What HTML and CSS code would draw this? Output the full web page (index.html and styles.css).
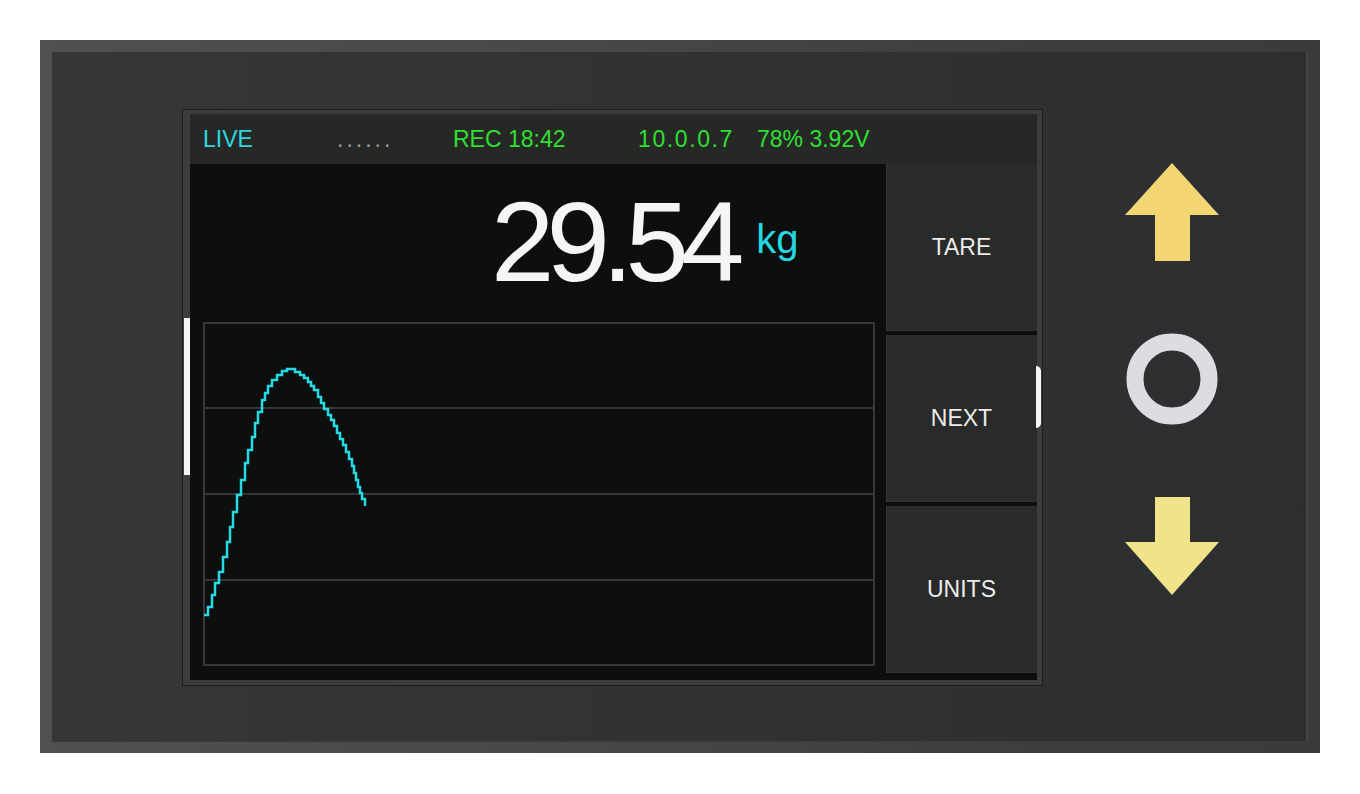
FILE: index.html
```html
<!DOCTYPE html>
<html lang="en">
<head>
<meta charset="utf-8">
<title>Load cell display</title>
<link rel="stylesheet" href="styles.css">
</head>
<body>
<div class="device">
  <div class="panel">
    <div class="screen">
      <div class="status">
        <span class="st st-live">LIVE</span>
        <span class="st st-dots">......</span>
        <span class="st st-green">REC 18:42</span>
        <span class="st st-green st-ip">10.0.0.7</span>
        <span class="st st-green">78% 3.92V</span>
      </div>
      <div class="body">
        <div class="main">
          <div class="reading">
            <span class="value">29.54</span>
            <span class="unit">kg</span>
          </div>
          <svg class="graph" viewBox="203 322 672 344" width="672" height="344">
            <rect x="204" y="323" width="670" height="342" fill="none" stroke="#383838" stroke-width="2"/>
            <g stroke="#363636" stroke-width="2">
              <line x1="204" y1="408" x2="874" y2="408"/>
              <line x1="204" y1="494" x2="874" y2="494"/>
              <line x1="204" y1="580" x2="874" y2="580"/>
            </g>
            <path class="trace" d="M204,615 H208 V607 H212 V595 H215 V583 H219 V572 H223 V557 H227 V542 H230 V527 H233 V512 H237 V495 H241 V480 H245 V463 H248 V450 H252 V437 H255 V423 H258 V412 H262 V400 H265 V393 H268 V386 H272 V380 H277 V375 H282 V371 H287 V369 H295 V372 H300 V375 H304 V378 H308 V382 H311 V386 H314 V390 H318 V397 H321 V403 H324 V409 H328 V415 H331 V420 H334 V426 H337 V433 H340 V439 H343 V445 H346 V452 H349 V459 H352 V466 H354 V473 H356 V480 H358 V487 H360 V493 H362 V499 H365 V506"/>
          </svg>
        </div>
        <div class="softkeys">
          <div class="key">TARE</div>
          <div class="key">NEXT</div>
          <div class="key">UNITS</div>
        </div>
      </div>
      <div class="scroll-mark"></div>
      <div class="tab-mark"></div>
    </div>
    <div class="nav">
      <svg class="nav-icon" width="94" height="98" viewBox="0 0 94 98">
        <polygon points="47,0 94,52 65,52 65,98 30,98 30,52 0,52" fill="#f3d574"/>
      </svg>
      <svg class="nav-ring" width="92" height="92" viewBox="0 0 92 92">
        <circle cx="46" cy="46" r="37" fill="none" stroke="#dcdde0" stroke-width="17"/>
      </svg>
      <svg class="nav-icon" width="94" height="98" viewBox="0 0 94 98">
        <polygon points="30,0 65,0 65,45 94,45 47,98 0,45 30,45" fill="#f0e38a"/>
      </svg>
    </div>
  </div>
</div>
</body>
</html>
```

FILE: styles.css
```css
* { box-sizing: border-box; }

html, body {
  margin: 0;
  padding: 0;
  background: #ffffff;
}

body {
  padding: 40px;
  width: 1360px;
  height: 794px;
}

/* outer housing */
.device {
  width: 1280px;
  height: 713px;
  padding: 12px 12px 11px 12px;
  background: linear-gradient(90deg, #4f5051 0%, #47484a 40%, #3d3e40 75%, #3a3b3d 100%);
}

.panel {
  height: 690px;
  display: flex;
  align-items: flex-start;
  padding: 58px 0 0 131px;
  background: linear-gradient(90deg, #353637 0%, #313234 50%, #2d2e30 100%);
  box-shadow: inset -2px 0 0 #434446, inset 0 -1px 0 #3a3b3d;
}

/* LCD module */
.screen {
  position: relative;
  width: 859px;
  height: 575px;
  border-style: solid;
  border-color: #3b3d3c;
  border-width: 4px 5px 5px 7px;
  box-shadow: 0 0 0 1px #1c1e1d;
  background: #0d0e0e;
  display: flex;
  flex-direction: column;
}

.status {
  height: 50px;
  flex: none;
  background: #262826;
  display: grid;
  grid-template-columns: 134px 116px 185px 119px auto;
  align-items: center;
  padding-left: 13px;
}

.st {
  font-family: "Liberation Sans", Arial, sans-serif;
  font-size: 23px;
  line-height: 26px;
  white-space: pre;
}

.st-live { color: #2fd6e0; }
.st-dots { color: #9a9a9a; letter-spacing: 3px; }
.st-green { color: #2fe032; }
.st-ip { letter-spacing: 1.6px; }

.body {
  flex: 1;
  display: flex;
}

.main {
  width: 696px;
  background: #0d0e0e;
  display: flex;
  flex-direction: column;
}

.reading {
  height: 158px;
  display: flex;
  align-items: flex-start;
  padding: 21px 0 0 301px;
}

.value {
  font-family: "Liberation Sans", Arial, sans-serif;
  font-size: 114px;
  line-height: 114px;
  letter-spacing: -8px;
  color: #f5f5f5;
}

.unit {
  font-family: "Liberation Sans", Arial, sans-serif;
  font-size: 40px;
  line-height: 40px;
  color: #22d8e2;
  margin: 34px 0 0 20px;
}

.graph {
  display: block;
  margin-left: 13px;
}

.trace {
  fill: none;
  stroke: #26dbe3;
  stroke-width: 2.5;
}

.softkeys {
  width: 151px;
  display: flex;
  flex-direction: column;
  gap: 4px;
  padding-bottom: 7px;
  background: #0d0e0e;
}

.key {
  flex: 1;
  display: flex;
  align-items: center;
  justify-content: center;
  background: #282b29;
  box-shadow: inset 1px 0 0 #353836, inset 0 -1px 0 #313432;
  font-family: "Liberation Sans", Arial, sans-serif;
  font-size: 23px;
  color: #ececec;
}

.scroll-mark {
  position: absolute;
  left: -6px;
  top: 204px;
  width: 6px;
  height: 157px;
  background: #f5f5f5;
}

.tab-mark {
  position: absolute;
  left: 846px;
  top: 252px;
  width: 5px;
  height: 62px;
  background: #f5f5f5;
  border-radius: 0 6px 6px 0;
}

/* navigation buttons */
.nav {
  display: flex;
  flex-direction: column;
  align-items: center;
  width: 94px;
  margin: 53px 0 0 83px;
}

.nav-icon { display: block; }

.nav-ring {
  display: block;
  margin: 72px 0;
}
```
